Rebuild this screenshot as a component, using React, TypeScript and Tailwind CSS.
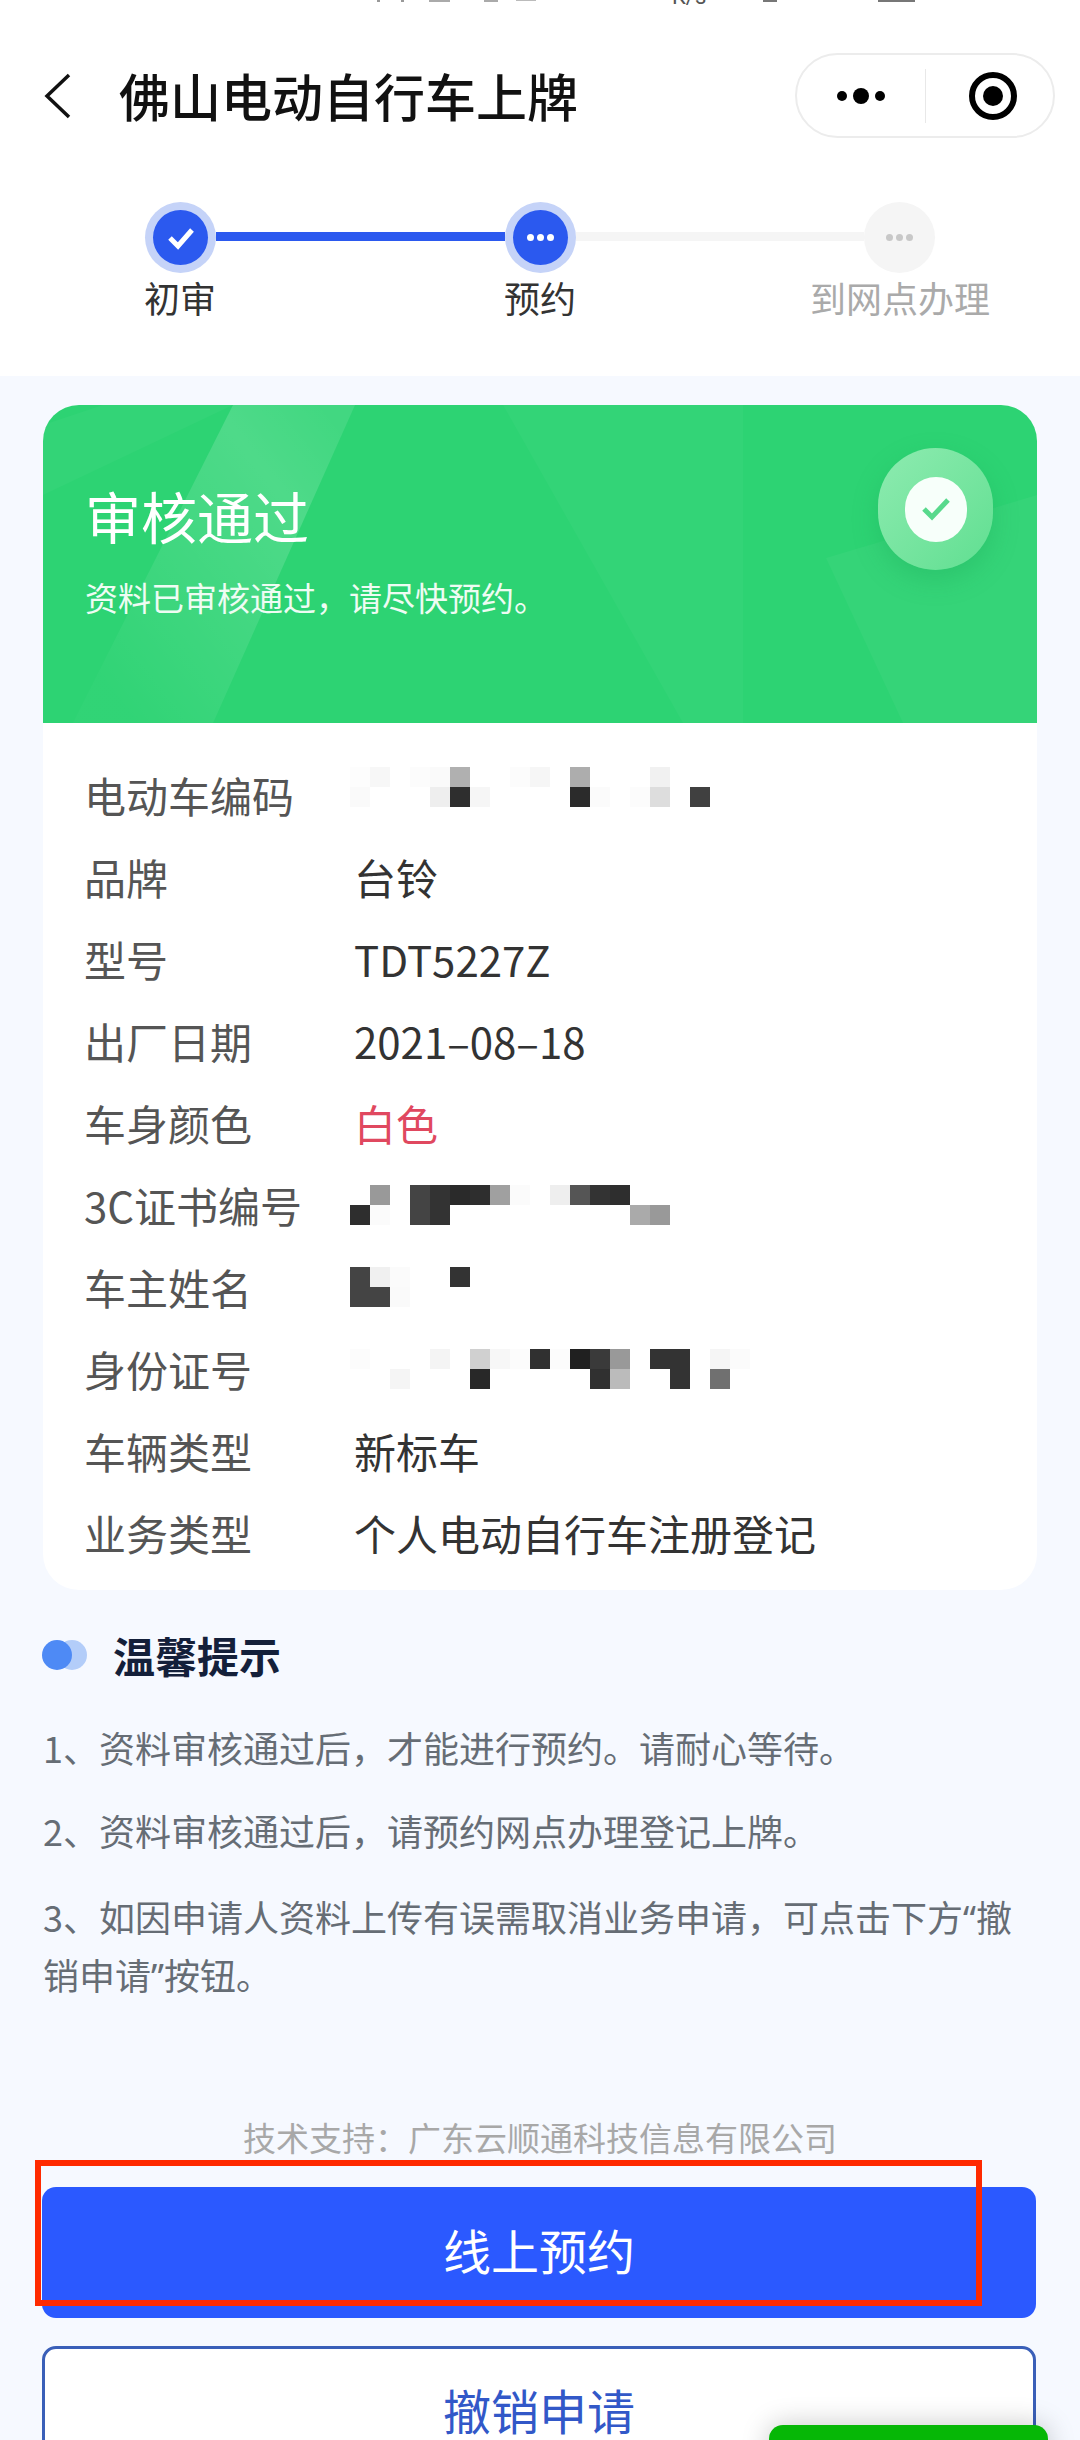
const mosaics = {
  code: [
    ['#fdfdfd', '#f7f7f7', '', '#fcfcfc', '#fafafa', '#b0b0b0', '', '', '#fcfcfc', '#f6f6f6', '', '#adadad', '', '', '', '#f1f1f1', '', ''],
    ['#fafafa', '', '', '', '#eeeeee', '#2e2e2e', '#f6f6f6', '', '', '', '', '#2b2b2b', '#fbfbfb', '', '#fcfcfc', '#dddddd', '', '#404040'],
  ],
  cert: [
    ['', '#999999', '', '#444444', '#333333', '#2a2a2a', '#2e2e2e', '#a0a0a0', '#fbfbfb', '', '#eeeeee', '#555555', '#333333', '#2e2e2e', '', ''],
    ['#2e2e2e', '#fbfbfb', '', '#444444', '#333333', '', '', '', '', '', '', '', '', '', '#aaaaaa', '#999999'],
  ],
  name: [
    ['#444444', '#f0f0f0', '#fbfbfb', '', '', '#333333'],
    ['#444444', '#444444', '#fafafa', '', '', ''],
  ],
  id: [
    ['#fcfcfc', '', '', '', '#f4f4f4', '', '#d0d0d0', '#f7f7f7', '#fcfcfc', '#303030', '#fcfcfc', '#202020', '#3a3a3a', '#999999', '', '#333333', '#333333', '', '#f5f5f5', '#fbfbfb'],
    ['', '', '#f5f5f5', '', '', '', '#282828', '', '', '', '', '', '#303030', '#bbbbbb', '', '', '#333333', '', '#707070', ''],
  ],
};

function Mosaic({ rows, raised }: { rows: string[][]; raised?: boolean }) {
  return (
    <div className={`flex flex-col -ml-1 ${raised ? '-mt-[16px]' : ''}`}>
      {rows.map((row, i) => (
        <div key={i} className="flex h-5">
          {row.map((color, j) => (
            <div key={j} className="w-5 h-5" style={{ backgroundColor: color || 'transparent' }} />
          ))}
        </div>
      ))}
    </div>
  );
}

function Dots({ color }: { color: string }) {
  return (
    <div className="flex gap-[3px]">
      <span className={`w-[7px] h-[7px] rounded-full ${color}`} />
      <span className={`w-[7px] h-[7px] rounded-full ${color}`} />
      <span className={`w-[7px] h-[7px] rounded-full ${color}`} />
    </div>
  );
}

const rows = [
  { label: '电动车编码', mosaic: mosaics.code, raised: true },
  { label: '品牌', value: '台铃' },
  { label: '型号', value: 'TDT5227Z' },
  { label: '出厂日期', value: '2021–08–18' },
  { label: '车身颜色', value: '白色', red: true },
  { label: '3C证书编号', mosaic: mosaics.cert },
  { label: '车主姓名', mosaic: mosaics.name },
  { label: '身份证号', mosaic: mosaics.id },
  { label: '车辆类型', value: '新标车' },
  { label: '业务类型', value: '个人电动自行车注册登记' },
];

export default function App() {
  return (
    <div className="relative h-[2440px] overflow-hidden bg-white font-['Noto_Sans_CJK_SC','Noto_Sans',sans-serif]">
      {/* status bar, cut off at the top */}
      <div className="h-[53px] relative">
        <span className="absolute left-[377px] top-0 w-[3px] h-[2px] bg-[#999]" />
        <span className="absolute left-[401px] top-0 w-[3px] h-[2px] bg-[#999]" />
        <span className="absolute left-[429px] top-0 w-[21px] h-[2px] bg-[#aaa]" />
        <span className="absolute left-[484px] top-0 w-[14px] h-[2px] bg-[#aaa]" />
        <span className="absolute left-[516px] top-0 w-[20px] h-[1px] bg-[#bbb]" />
        <span className="absolute left-[672px] -top-[14px] text-[22px] leading-[22px] text-[#555] font-['Roboto',sans-serif]">K/s</span>
        <span className="absolute left-[763px] top-0 w-[14px] h-[2px] bg-[#777]" />
        <span className="absolute left-[878px] top-0 w-[37px] h-[2px] bg-[#777]" />
      </div>

      {/* nav */}
      <div className="flex items-center h-[85px] pl-[44px] pr-[25px]">
        <svg width="28" height="46" viewBox="0 0 28 46" fill="none" className="shrink-0">
          <path d="M25 2 L3 23 L25 44" stroke="#111" strokeWidth="3.5" />
        </svg>
        <h1 className="ml-[47px] -mt-[2px] text-[51px] leading-[60px] font-medium text-[#111]">佛山电动自行车上牌</h1>
        <div className="ml-auto w-[260px] h-[85px] rounded-full border-2 border-[#ececec] flex items-center">
          <div className="flex items-center justify-center gap-[6px] w-[128px]">
            <span className="w-[10px] h-[10px] rounded-full bg-black" />
            <span className="w-[16px] h-[16px] rounded-full bg-black" />
            <span className="w-[10px] h-[10px] rounded-full bg-black" />
          </div>
          <div className="w-[1px] h-[54px] bg-[#e8e8e8]" />
          <div className="flex-1 flex justify-center pl-[6px]">
            <div className="w-[48px] h-[48px] rounded-full border-[6px] border-black flex items-center justify-center">
              <span className="w-[20px] h-[20px] rounded-full bg-black" />
            </div>
          </div>
        </div>
      </div>

      {/* steps */}
      <div className="pt-[64px] h-[238px]">
        <div className="flex items-center px-[145px]">
          <div className="w-[71px] h-[71px] shrink-0 rounded-full bg-[#c5d3f8] flex items-center justify-center">
            <div className="w-[55px] h-[55px] rounded-full bg-[#2b59ef] flex items-center justify-center">
              <svg width="30" height="24" viewBox="0 0 30 24" fill="none">
                <path d="M4 12 L12 20 L26 4" stroke="#fff" strokeWidth="5" />
              </svg>
            </div>
          </div>
          <div className="flex-1 h-[9px] -mt-[3px] bg-[#2b59ef]" />
          <div className="w-[71px] h-[71px] shrink-0 rounded-full bg-[#c5d3f8] flex items-center justify-center">
            <div className="w-[55px] h-[55px] rounded-full bg-[#2b59ef] flex items-center justify-center">
              <Dots color="bg-white" />
            </div>
          </div>
          <div className="flex-1 h-[9px] -mt-[3px] bg-[#f5f5f5]" />
          <div className="w-[71px] h-[71px] shrink-0 rounded-full bg-[#f5f5f5] flex items-center justify-center">
            <Dots color="bg-[#c8c8c8]" />
          </div>
        </div>
        <div className="grid grid-cols-3 text-center text-[36px] leading-[44px] mt-[2px]">
          <div className="text-[#333]">初审</div>
          <div className="text-[#333]">预约</div>
          <div className="text-[#aaa]">到网点办理</div>
        </div>
      </div>

      {/* page body */}
      <div className="h-[2064px] bg-[#f6f9ff] px-[43px] pt-[29px]">
        <div className="rounded-[36px] overflow-hidden bg-white">
          <div className="relative h-[318px] bg-[#2dd373] pl-[42px] pt-[79px] overflow-hidden">
            <svg className="absolute inset-0" width="994" height="318" viewBox="0 0 994 318" fill="none">
              <defs>
                <linearGradient id="strip" gradientUnits="userSpaceOnUse" x1="40" y1="250" x2="310" y2="40">
                  <stop offset="0" stopColor="#fff" stopOpacity="0.02" />
                  <stop offset="0.75" stopColor="#fff" stopOpacity="0.16" />
                  <stop offset="1" stopColor="#fff" stopOpacity="0.1" />
                </linearGradient>
              </defs>
              <path d="M190 0 L312 0 L170 318 L30 318 Z" fill="url(#strip)" />
              <path d="M0 90 L190 0 L60 0 L0 20 Z" fill="#fff" fillOpacity="0.03" />
              <path d="M783 153 L994 90 L994 318 L860 318 Z" fill="#fff" fillOpacity="0.04" />
              <path d="M460 0 L700 0 L700 318 L640 318 Z" fill="#fff" fillOpacity="0.03" />
            </svg>
            <div className="relative text-[56px] leading-[62px] text-white">审核通过</div>
            <div className="relative mt-[31px] text-[33px] leading-[40px] text-[#eefcf3]">资料已审核通过，请尽快预约。</div>
            <div className="absolute left-[835px] top-[43px] w-[115px] h-[122px] rounded-full bg-gradient-to-br from-[#8debb0] to-[#5fdf91] shadow-[0_10px_24px_rgba(30,170,90,0.35)] flex items-center justify-center">
              <div className="w-[62px] h-[65px] rounded-full bg-[#f7fffa] flex items-center justify-center">
                <svg width="30" height="24" viewBox="0 0 30 24" fill="none">
                  <path d="M3 12 L11 20 L27 3" stroke="#58d98c" strokeWidth="5" />
                </svg>
              </div>
            </div>
          </div>
          <div className="pt-[31px] pb-[16px] pl-[41px]">
            {rows.map(row => (
              <div key={row.label} className="flex items-center h-[82px]">
                <div className="w-[270px] shrink-0 text-[42px] text-[#555] leading-[56px]">{row.label}</div>
                {row.mosaic ? (
                  <Mosaic rows={row.mosaic} raised={row.raised} />
                ) : (
                  <div className={`text-[42px] leading-[56px] ${row.red ? 'text-[#e0485f]' : 'text-[#333]'}`}>{row.value}</div>
                )}
              </div>
            ))}
          </div>
        </div>

        {/* tips */}
        <div className="flex items-center mt-[36px] h-[58px]">
          <div className="relative w-[45px] h-[30px] shrink-0 -ml-[1px]">
            <span className="absolute left-[15px] top-0 w-[30px] h-[30px] rounded-full bg-[#b3cdf9]" />
            <span className="absolute left-0 top-0 w-[30px] h-[30px] rounded-full bg-[#4e8af5]" />
          </div>
          <div className="ml-[26px] text-[42px] font-bold text-[#14203a] leading-[58px]">温馨提示</div>
        </div>
        <div className="mt-[34px] text-[36px] text-[#666d75] leading-[58px]">
          <p>1、资料审核通过后，才能进行预约。请耐心等待。</p>
          <p className="mt-[25px]">2、资料审核通过后，请预约网点办理登记上牌。</p>
          <p className="mt-[28px]">
            3、如因申请人资料上传有误需取消业务申请，可点击下方<span className="leading-none font-['Noto_Sans',sans-serif]">“</span>撤销申请<span className="leading-none font-['Noto_Sans',sans-serif]">”</span>按钮。
          </p>
        </div>

        <div className="mt-[112px] text-center text-[33px] leading-[44px] text-[#a8a8a8]">技术支持：广东云顺通科技信息有限公司</div>
        <div className="mt-[28px] -ml-[1px] mr-[1px] h-[131px] pb-[8px] rounded-[14px] bg-[#2b59ff] flex items-center justify-center text-[48px] text-white">线上预约</div>
        <div className="mt-[28px] -ml-[1px] mr-[1px] h-[132px] pb-[6px] rounded-[14px] border-[3px] border-[#3a5fb8] bg-white flex items-center justify-center text-[48px] text-[#3258c8]">撤销申请</div>
      </div>

      {/* red annotation box */}
      <div className="absolute left-[35px] top-[2160px] w-[947px] h-[146px] border-[6px] border-[#ff2a00]" />
      {/* floating green button, mostly off screen */}
      <div className="absolute left-[769px] top-[2425px] w-[279px] h-[40px] rounded-t-[14px] bg-[#06b706] shadow-[0_0_28px_rgba(0,0,0,0.22)]" />
    </div>
  );
}
